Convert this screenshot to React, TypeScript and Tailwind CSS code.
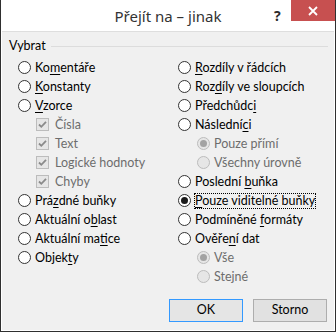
import React from "react";

type Item = {
  kind: "radio" | "check";
  text: string;
  u?: number;
  indent?: boolean;
  disabled?: boolean;
  checked?: boolean;
  focus?: boolean;
};

const left: Item[] = [
  { kind: "radio", text: "Komentáře", u: 2 },
  { kind: "radio", text: "Konstanty", u: 0 },
  { kind: "radio", text: "Vzorce", u: 0 },
  { kind: "check", text: "Čísla", indent: true, disabled: true, checked: true },
  { kind: "check", text: "Text", indent: true, disabled: true, checked: true },
  { kind: "check", text: "Logické hodnoty", indent: true, disabled: true, checked: true },
  { kind: "check", text: "Chyby", indent: true, disabled: true, checked: true },
  { kind: "radio", text: "Prázdné buňky", u: 3 },
  { kind: "radio", text: "Aktuální oblast", u: 10 },
  { kind: "radio", text: "Aktuální matice", u: 11 },
  { kind: "radio", text: "Objekty", u: 5 },
];

const right: Item[] = [
  { kind: "radio", text: "Rozdíly v řádcích", u: 0 },
  { kind: "radio", text: "Rozdíly ve sloupcích", u: 3 },
  { kind: "radio", text: "Předchůdci", u: 9 },
  { kind: "radio", text: "Následníci", u: 8 },
  { kind: "radio", text: "Pouze přímí", indent: true, disabled: true, checked: true },
  { kind: "radio", text: "Všechny úrovně", indent: true, disabled: true },
  { kind: "radio", text: "Poslední buňka", u: 9 },
  { kind: "radio", text: "Pouze viditelné buňky", u: 0, checked: true, focus: true },
  { kind: "radio", text: "Podmíněné formáty", u: 10 },
  { kind: "radio", text: "Ověření dat", u: 5 },
  { kind: "radio", text: "Vše", indent: true, disabled: true, checked: true },
  { kind: "radio", text: "Stejné", indent: true, disabled: true },
];

function Label({ text, u }: { text: string; u?: number }) {
  if (u === undefined) return <>{text}</>;
  return (
    <>
      {text.slice(0, u)}
      <span className="underline underline-offset-[2px]">{text[u]}</span>
      {text.slice(u + 1)}
    </>
  );
}

function Radio({ checked, disabled }: { checked?: boolean; disabled?: boolean }) {
  return (
    <span
      className={
        "flex h-[13px] w-[13px] shrink-0 items-center justify-center rounded-full border " +
        (disabled ? "border-[#bcbcbc] bg-[#e6e6e6]" : "border-[#333333] bg-white")
      }
    >
      {checked && (
        <span
          className={
            "h-[7px] w-[7px] rounded-full " + (disabled ? "bg-[#a3a3a3]" : "bg-[#1a1a1a]")
          }
        />
      )}
    </span>
  );
}

function Check() {
  return (
    <span className="flex h-[13px] w-[13px] shrink-0 items-center justify-center border border-[#bcbcbc] bg-[#e6e6e6]">
      <svg width="11" height="11" viewBox="0 0 11 11">
        <path d="M2 5.5 L4.3 7.8 L9 2.8" fill="none" stroke="#8a8a8a" strokeWidth="1.8" />
      </svg>
    </span>
  );
}

function Row({ it }: { it: Item }) {
  return (
    <div
      className={
        "flex h-[19px] items-center " +
        (it.indent ? (it.kind === "check" ? "pl-[18px]" : "pl-[19px]") : "")
      }
    >
      {it.kind === "radio" ? (
        <Radio checked={it.checked} disabled={it.disabled} />
      ) : (
        <Check />
      )}
      <span
        className={
          "whitespace-nowrap leading-[14px] " +
          (it.kind === "check" ? "ml-[5px] " : "ml-[3px] ") +
          (it.disabled ? "text-[#6d6d6d] " : "text-black ") +
          (it.focus ? "border border-dotted border-black" : "border border-transparent")
        }
      >
        <Label text={it.text} u={it.u} />
      </span>
    </div>
  );
}

export default function App() {
  return (
    <div
      className="flex h-[332px] w-[336px] flex-col border-x border-b border-[#2f2f2f] bg-white text-[12.5px]"
      style={{ fontFamily: 'Lato, "Noto Sans", sans-serif' }}
    >
      <div
        className="relative flex h-[31px] shrink-0 items-center justify-center"
        style={{ fontFamily: '"Noto Sans", sans-serif' }}
      >
        <span className="mt-[1px] text-[15px] text-[#333333]">Přejít na – jinak</span>
        <span className="absolute left-[273px] top-[5px] text-[14px] font-bold text-[#2b2b2b]">?</span>
        <div className="absolute right-0 top-0 flex h-[21px] w-[44px] items-center justify-center bg-[#c75050]">
          <svg width="10" height="10" viewBox="0 0 10 10">
            <path d="M1 1 L9 9 M9 1 L1 9" stroke="white" strokeWidth="1.8" />
          </svg>
        </div>
      </div>
      <div className="mx-[1px] mb-[1px] flex flex-1 flex-col border-t border-[#dedede] bg-[#f0f0f0]">
        <div className="mt-[7px] flex items-center pl-[7px] pr-[6px]">
          <span className="leading-[14px]">Vybrat</span>
          <div className="ml-[5px] h-px flex-1 bg-[#dcdcdc]" />
        </div>
        <div className="mt-[5px] grid grid-cols-[160px_1fr] pl-[16px]">
          <div className="flex flex-col">
            {left.map((it) => (
              <Row key={it.text} it={it} />
            ))}
          </div>
          <div className="flex flex-col">
            {right.map((it) => (
              <Row key={it.text} it={it} />
            ))}
          </div>
        </div>
        <div className="mb-[8px] mt-auto flex justify-end gap-[10px] pr-[7px]">
          <button className="h-[23px] w-[74px] border border-[#3399ff] bg-[#e5e5e5] text-black">OK</button>
          <button className="h-[23px] w-[74px] border border-[#adadad] bg-[#e1e1e1] text-black">Storno</button>
        </div>
      </div>
    </div>
  );
}
